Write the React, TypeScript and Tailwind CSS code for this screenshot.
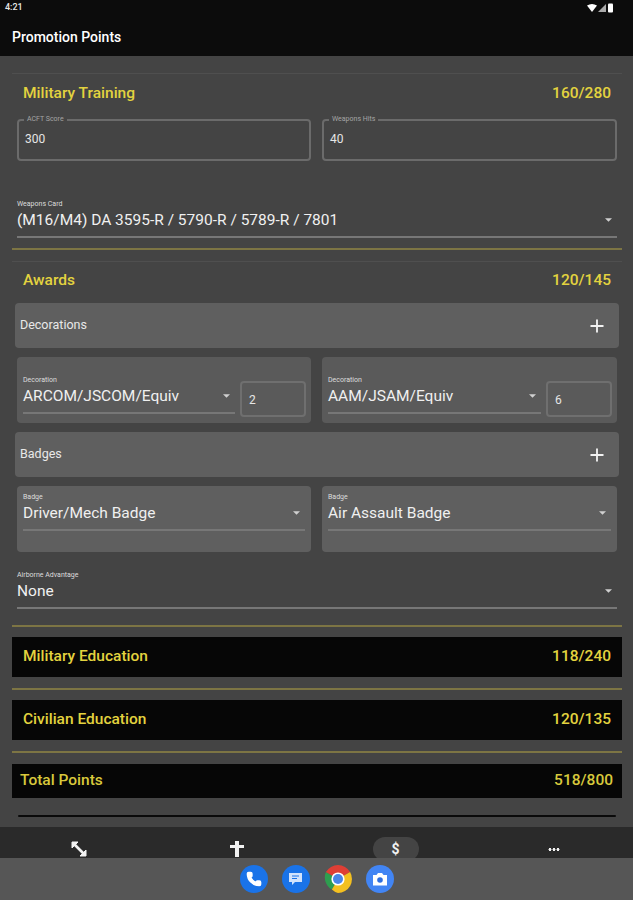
import React from 'react';
import { Plus, Phone } from 'lucide-react';

const YELLOW = 'text-[#e3d33f]';

const Caret = () => (
  <svg width="7" height="4" viewBox="0 0 8 4" className="shrink-0">
    <path d="M0 0h8L4 4z" fill="#d0d0d0" />
  </svg>
);

const GoldLine = () => <div className="h-[2px] bg-[#7d7544]" />;
const FaintLine = () => <div className="h-px bg-[#4f4f4f]" />;

const SectionHeader = ({ title, score }: { title: string; score: string }) => (
  <div className={`flex items-center justify-between px-[11px] text-[15.5px] leading-[22px] font-medium ${YELLOW}`}>
    <span>{title}</span>
    <span>{score}</span>
  </div>
);

const Outlined = ({ label, value }: { label: string; value: string }) => (
  <div className="relative h-[42px] rounded border-2 border-[#6b6b6b] px-[6px] pt-[11px] text-xs leading-[15px] text-[#e6e6e6]">
    <span className="absolute -top-[6px] left-[5px] bg-[#444444] px-[3px] text-[7px] leading-[9px] text-[#a5a5a5]">{label}</span>
    {value}
  </div>
);

const Select = ({ label, value, className }: { label: string; value: string; className?: string }) => (
  <div className={className}>
    <div className="text-[7px] leading-[9px] text-[#dddddd]">{label}</div>
    <div className="mt-[3px] flex h-[26px] items-center justify-between border-b-2 border-[#777777] pr-[5px] pb-[8px]">
      <span className="text-[15.5px] leading-[18px] text-[#f0f0f0]">{value}</span>
      <Caret />
    </div>
  </div>
);

const Expander = ({ title }: { title: string }) => (
  <div className="mx-[3px] flex h-[45px] items-center justify-between rounded-sm bg-[#5f5f5f] pr-[12px] pl-[5px] text-[12.5px] text-[#e8e8e8]">
    <span>{title}</span>
    <Plus size={20} strokeWidth={2.2} color="#f2f2f2" />
  </div>
);

const DecorationCard = ({ value, count }: { value: string; count: string }) => (
  <div className="flex h-[66px] items-start gap-[5px] rounded-sm bg-[#5a5a5a] pt-[19px] pr-[5px] pl-[6px]">
    <Select label="Decoration" value={value} className="flex-1" />
    <div className="mt-[5px] flex h-[36px] w-[66px] items-center rounded border-2 border-[#6f6f6f] px-[7px] pt-[2px] text-xs text-[#e6e6e6]">{count}</div>
  </div>
);

const BadgeCard = ({ value }: { value: string }) => (
  <div className="h-[66px] rounded-sm bg-[#5f5f5f] px-[6px] pt-[7px]">
    <Select label="Badge" value={value} />
  </div>
);

const BlackRow = ({ title, score, className, inset }: { title: string; score: string; className: string; inset: string }) => (
  <div className={`flex items-center justify-between bg-[#060606] text-[15.5px] font-medium ${inset} ${className}`}>
    <span>{title}</span>
    <span>{score}</span>
  </div>
);

const NavItem = ({ children, active }: { children: React.ReactNode; active?: boolean }) => (
  <div className="flex flex-1 justify-center">
    <div className={`flex h-[24px] w-[46px] items-center justify-center rounded-full ${active ? 'bg-[#444444]' : ''}`}>
      {children}
    </div>
  </div>
);

const Chrome = () => (
  <svg width="28" height="28" viewBox="0 0 28 28">
    <path d="M14 14 7.9 24.5A14 14 0 0 1 1.9 7z" fill="#2e9e4f" />
    <path d="M14 14 1.9 7A14 14 0 0 1 26.1 7z" fill="#df3f35" />
    <path d="M14 14 26.1 7A14 14 0 0 1 14 28 14 14 0 0 1 7.9 24.5z" fill="#f4c020" />
    <circle cx="14" cy="14" r="6.6" fill="#ffffff" />
    <circle cx="14" cy="14" r="5" fill="#4a86e8" />
  </svg>
);

const DockIcon = ({ children, bg }: { children: React.ReactNode; bg: string }) => (
  <div className={`flex h-[28px] w-[28px] items-center justify-center rounded-full ${bg}`}>{children}</div>
);

export default function App() {
  return (
    <div className="flex h-[900px] w-[633px] flex-col overflow-hidden bg-[#444444] font-['Roboto',sans-serif]">
      {/* Status + app bar */}
      <div className="h-[56px] shrink-0 bg-[#0c0c0c] pt-[1px] pl-[5px] text-white">
        <div className="flex h-[14px] items-center justify-between pr-[19px] text-[9px] font-medium text-[#e8e8e8]">
          <span>4:21</span>
          <div className="flex items-center gap-[1px]">
            <svg width="10" height="8" viewBox="0 0 10 8"><path d="M0 1.5Q5-1.5 10 1.5L5 8z" fill="#fff" /></svg>
            <svg width="8" height="8" viewBox="0 0 8 8"><path d="M8 0v8H0z" fill="#aaa" /></svg>
            <svg width="7" height="10" viewBox="0 0 7 10"><rect x="1" y="0.5" width="5" height="9" rx="1" fill="#fff" /></svg>
          </div>
        </div>
        <div className="mt-[12px] pl-[7px] text-sm leading-[20px] font-medium">Promotion Points</div>
      </div>

      {/* Content */}
      <div className="flex-1 overflow-hidden pt-[17px] pr-[11px] pl-[12px]">
        <FaintLine />
        <div className="pt-[8px]"><SectionHeader title="Military Training" score="160/280" /></div>
        <div className="mt-[15px] grid grid-cols-[294px_1fr] gap-[11px] px-[5px]">
          <Outlined label="ACFT Score" value="300" />
          <Outlined label="Weapons Hits" value="40" />
        </div>
        <Select label="Weapons Card" value="(M16/M4) DA 3595-R / 5790-R / 5789-R / 7801" className="mt-[39px] px-[5px]" />
        <div className="mt-[10px]"><GoldLine /></div>
        <div className="mt-[11px]"><FaintLine /></div>
        <div className="pt-[7px]"><SectionHeader title="Awards" score="120/145" /></div>
        <div className="mt-[12px]"><Expander title="Decorations" /></div>
        <div className="mt-[9px] grid grid-cols-[294px_1fr] gap-[11px] px-[5px]">
          <DecorationCard value="ARCOM/JSCOM/Equiv" count="2" />
          <DecorationCard value="AAM/JSAM/Equiv" count="6" />
        </div>
        <div className="mt-[9px]"><Expander title="Badges" /></div>
        <div className="mt-[9px] grid grid-cols-[294px_1fr] gap-[11px] px-[5px]">
          <BadgeCard value="Driver/Mech Badge" />
          <BadgeCard value="Air Assault Badge" />
        </div>
        <Select label="Airborne Advantage" value="None" className="mt-[19px] px-[5px]" />
        <div className="mt-[16px]"><GoldLine /></div>
        <BlackRow title="Military Education" score="118/240" inset="px-[11px]" className={`mt-[10px] h-[40px] ${YELLOW}`} />
        <div className="mt-[11px]"><GoldLine /></div>
        <BlackRow title="Civilian Education" score="120/135" inset="px-[11px]" className={`mt-[10px] h-[40px] ${YELLOW}`} />
        <div className="mt-[11px]"><GoldLine /></div>
        <BlackRow title="Total Points" score="518/800" inset="pr-[9px] pl-[8px]" className="mt-[11px] h-[34px] text-[#d8c93c]" />
        <div className="mx-[6px] mt-[17px] h-[2px] rounded-full bg-[#0a0a0a]" />
      </div>

      {/* Bottom navigation */}
      <div className="flex h-[31px] shrink-0 items-start overflow-hidden bg-[#2a2a2a] pt-[10px] text-white">
        <NavItem>
          <svg width="16" height="16" viewBox="0 0 16 16" fill="none" stroke="#f2f2f2" strokeWidth="2.6">
            <path d="M4 4l8 8" />
            <path d="M1 7V1h6z" fill="#f2f2f2" strokeWidth="1" />
            <path d="M15 9v6H9z" fill="#f2f2f2" strokeWidth="1" />
          </svg>
        </NavItem>
        <NavItem>
          <svg width="14" height="16" viewBox="0 0 14 16" fill="#f2f2f2"><path d="M5 0h4v4h5v3H9v9H5V7H0V4h5z" /></svg>
        </NavItem>
        <NavItem active><span className="text-sm leading-none font-bold text-[#f2f2f2]">$</span></NavItem>
        <NavItem><span className="h-[3px] w-[12px] bg-[radial-gradient(circle,#f2f2f2_1.4px,transparent_1.6px)] bg-[length:4px_3px]" /></NavItem>
      </div>

      {/* Launcher dock */}
      <div className="flex h-[42px] shrink-0 items-center justify-center gap-[14px] bg-[#565656] pb-[1px]">
        <DockIcon bg="bg-[#1a73e8]"><Phone size={16} fill="#fff" color="#fff" /></DockIcon>
        <DockIcon bg="bg-[#1a73e8]">
          <svg width="15" height="14" viewBox="0 0 15 14"><path d="M1 1h13v9H7l-3 3v-3H1z" fill="#d2e3fc" /><path d="M4 4h7M4 6.500h5" stroke="#1a73e8" /></svg>
        </DockIcon>
        <Chrome />
        <DockIcon bg="bg-[#4285f4]">
          <svg width="16" height="14" viewBox="0 0 16 14"><path d="M1 3h3.500L6 1h4l1.500 2H15v10.500H1z" fill="#fff" /><circle cx="8" cy="8" r="2.800" fill="#2f6fe0" /></svg>
        </DockIcon>
      </div>
    </div>
  );
}
